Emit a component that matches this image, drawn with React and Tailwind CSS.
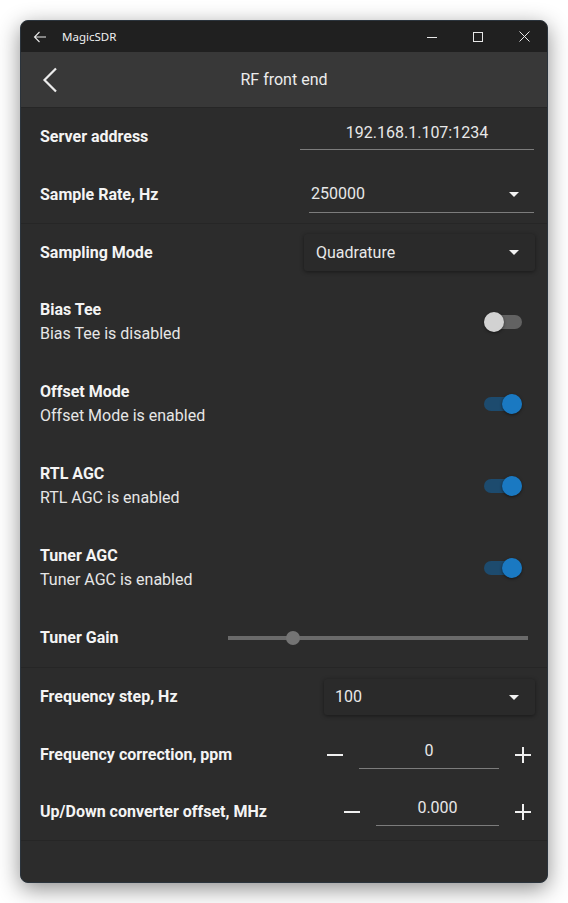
import React from "react";

const font = { fontFamily: "Roboto, 'Liberation Sans', sans-serif" };

function Arrow() {
  return (
    <svg width="10" height="5" viewBox="0 0 10 5" className="shrink-0">
      <polygon points="0,0 10,0 5,5" fill="#f2f2f2" />
    </svg>
  );
}

function Toggle({ on }) {
  return (
    <div className="relative w-[38px] h-[20px] mr-[12px] shrink-0">
      <div
        className={
          "absolute left-0 right-0 top-[3px] h-[14px] rounded-full " +
          (on ? "bg-[#1d4b6e]" : "bg-[#626262]")
        }
      />
      <div
        className={
          "absolute top-0 w-[20px] h-[20px] rounded-full shadow-[0_1px_3px_rgba(0,0,0,0.5)] " +
          (on ? "right-0 bg-[#1a79c2]" : "left-0 bg-[#d2d2d2]")
        }
      />
    </div>
  );
}

function ToggleRow({ title, sub, on }) {
  return (
    <div className="h-[82px] flex items-center pl-[19px] pr-[13px] justify-between">
      <div className="flex flex-col">
        <span className="text-[16px] leading-[24px] font-bold text-[#f4f4f4]">{title}</span>
        <span className="text-[16px] leading-[24px] text-[#e6e6e6]">{sub}</span>
      </div>
      <Toggle on={on} />
    </div>
  );
}

function Minus() {
  return (
    <svg width="16" height="16" viewBox="0 0 16 16" className="shrink-0">
      <rect x="0" y="7" width="16" height="2" fill="#f0f0f0" />
    </svg>
  );
}

function Plus() {
  return (
    <svg width="16" height="16" viewBox="0 0 16 16" className="shrink-0">
      <rect x="0" y="7" width="16" height="2" fill="#f0f0f0" />
      <rect x="7" y="0" width="2" height="16" fill="#f0f0f0" />
    </svg>
  );
}

function Stepper({ label, value, width }) {
  return (
    <div className="h-[57px] flex items-center pl-[19px] pr-[16px] justify-between">
      <span className="text-[16px] font-bold text-[#f4f4f4]">{label}</span>
      <div className="flex items-center gap-[16px]">
        <Minus />
        <div
          className={
            "h-[36px] mb-[7px] flex items-center justify-center border-b border-[#7c7c7c] " + width
          }
        >
          <span className="text-[16px] text-[#e8e8e8]">{value}</span>
        </div>
        <Plus />
      </div>
    </div>
  );
}

export default function App() {
  return (
    <div className="w-[568px] h-[903px] bg-white p-[20px]" style={font}>
      <div className="w-full h-full flex flex-col rounded-[8px] overflow-hidden border border-[#2b343d] bg-[#2c2c2c] shadow-[0_6px_22px_rgba(0,0,0,0.45)]">
        {/* title bar */}
        <div className="h-[31px] shrink-0 bg-[#202020] flex items-center">
          <svg width="14" height="12" viewBox="0 0 14 12" className="ml-[12px]">
            <path d="M13 6H1.5M6.5 1L1.5 6l5 5" stroke="#e8e8e8" strokeWidth="1.1" fill="none" />
          </svg>
          <span
            className="ml-[15px] text-[11.5px] text-[#f0f0f0]"
            style={{ fontFamily: "'Noto Sans', 'Open Sans', sans-serif" }}
          >
            MagicSDR
          </span>
          <div className="ml-auto flex items-center h-full">
            <div className="w-[46px] h-full flex items-center justify-center">
              <svg width="10" height="10" viewBox="0 0 10 10">
                <path d="M0 5.5H10" stroke="#e8e8e8" strokeWidth="1" />
              </svg>
            </div>
            <div className="w-[46px] h-full flex items-center justify-center">
              <svg width="10" height="10" viewBox="0 0 10 10">
                <rect x="0.5" y="0.5" width="9" height="9" stroke="#e8e8e8" strokeWidth="1" fill="none" />
              </svg>
            </div>
            <div className="w-[46px] h-full flex items-center justify-center">
              <svg width="11" height="11" viewBox="0 0 11 11">
                <path d="M0.5 0.5L10.5 10.5M10.5 0.5L0.5 10.5" stroke="#e8e8e8" strokeWidth="1" />
              </svg>
            </div>
          </div>
        </div>

        {/* header */}
        <div className="h-[56px] shrink-0 bg-[#383838] border-b border-[#262626] flex items-center relative">
          <svg width="16" height="26" viewBox="0 0 16 26" className="ml-[21px]">
            <path d="M14 1.5L2.5 13L14 24.5" stroke="#ececec" strokeWidth="2.2" fill="none" />
          </svg>
          <span className="absolute left-0 right-0 text-center text-[16px] text-[#ececec] pointer-events-none">
            RF front end
          </span>
        </div>

        {/* server address */}
        <div className="h-[58px] shrink-0 flex items-start pl-[19px] pr-[13px] justify-between">
          <span className="mt-[19px] leading-[20px] text-[16px] font-bold text-[#f4f4f4]">Server address</span>
          <div className="mt-[6px] w-[234px] h-[36px] pt-[3px] flex items-center justify-center border-b border-[#7c7c7c]">
            <span className="text-[16px] text-[#e8e8e8]">192.168.1.107:1234</span>
          </div>
        </div>

        {/* sample rate */}
        <div className="h-[57px] shrink-0 flex items-center pl-[19px] pr-[13px] justify-between">
          <span className="text-[16px] font-bold text-[#f4f4f4]">Sample Rate, Hz</span>
          <div className="w-[225px] h-[36px] flex items-center justify-between border-b border-[#7c7c7c] pl-[2px] pr-[15px]">
            <span className="text-[16px] text-[#e8e8e8]">250000</span>
            <Arrow />
          </div>
        </div>

        <div className="h-px bg-[#262626] shrink-0" />

        {/* sampling mode */}
        <div className="h-[57px] shrink-0 flex items-center pl-[19px] pr-[12px] justify-between">
          <span className="text-[16px] font-bold text-[#f4f4f4]">Sampling Mode</span>
          <div className="w-[231px] h-[37px] flex items-center justify-between bg-[#2a2a2a] rounded-[3px] shadow-[0_1px_4px_rgba(0,0,0,0.45)] pl-[12px] pr-[16px]">
            <span className="text-[16px] text-[#e8e8e8]">Quadrature</span>
            <Arrow />
          </div>
        </div>

        <ToggleRow title="Bias Tee" sub="Bias Tee is disabled" on={false} />
        <ToggleRow title="Offset Mode" sub="Offset Mode is enabled" on={true} />
        <ToggleRow title="RTL AGC" sub="RTL AGC is enabled" on={true} />
        <ToggleRow title="Tuner AGC" sub="Tuner AGC is enabled" on={true} />

        {/* tuner gain */}
        <div className="h-[58px] shrink-0 flex items-center pl-[19px] pr-[19px] justify-between">
          <span className="text-[16px] font-bold text-[#f4f4f4]">Tuner Gain</span>
          <div className="relative w-[300px] h-[14px] flex items-center">
            <div className="w-full h-[4px] bg-[#6a6a6a]" />
            <div className="absolute left-[58px] top-0 w-[14px] h-[14px] rounded-full bg-[#747474]" />
          </div>
        </div>

        <div className="h-px bg-[#262626] shrink-0" />

        {/* frequency step */}
        <div className="h-[58px] shrink-0 flex items-center pl-[19px] pr-[12px] justify-between">
          <span className="text-[16px] font-bold text-[#f4f4f4]">Frequency step, Hz</span>
          <div className="w-[211px] h-[36px] flex items-center justify-between bg-[#2a2a2a] rounded-[3px] shadow-[0_1px_4px_rgba(0,0,0,0.45)] pl-[11px] pr-[16px]">
            <span className="text-[16px] text-[#e8e8e8]">100</span>
            <Arrow />
          </div>
        </div>

        <Stepper label="Frequency correction, ppm" value="0" width="w-[140px]" />
        <Stepper label="Up/Down converter offset, MHz" value="0.000" width="w-[123px]" />

        <div className="h-px bg-[#262626] shrink-0" />
        <div className="flex-1" />
      </div>
    </div>
  );
}
